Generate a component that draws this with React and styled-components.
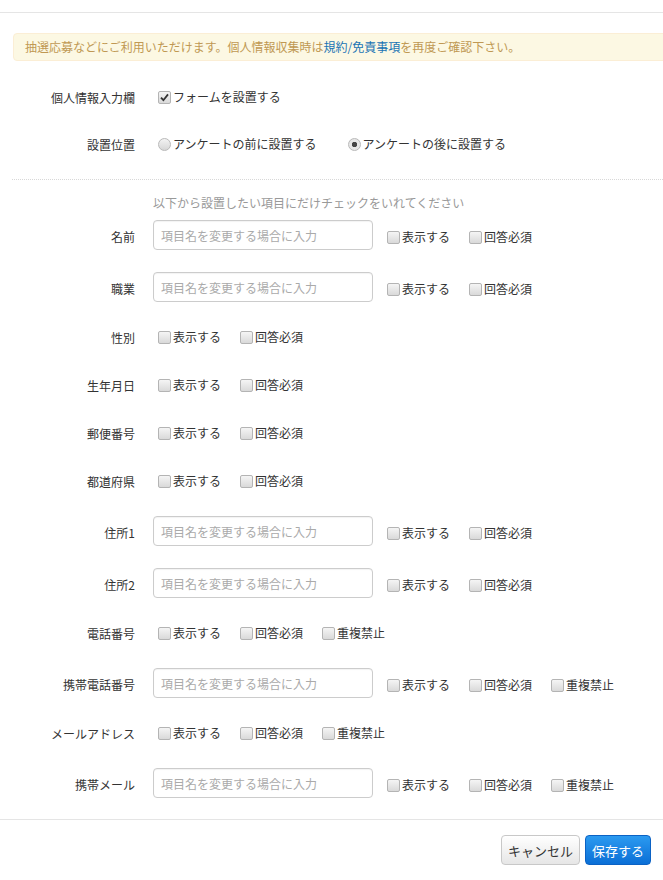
import React from 'react'
import styled, { createGlobalStyle, css } from 'styled-components'

const GlobalStyle = createGlobalStyle`
  html, body {
    margin: 0;
    padding: 0;
    background: #fff;
  }
  body {
    font-family: "Noto Sans CJK JP", "Noto Sans", sans-serif;
    font-size: 12px;
    color: #333;
  }
`

const fields = [
  { name: '名前', input: true, opts: ['表示する', '回答必須'] },
  { name: '職業', input: true, opts: ['表示する', '回答必須'] },
  { name: '性別', opts: ['表示する', '回答必須'] },
  { name: '生年月日', opts: ['表示する', '回答必須'] },
  { name: '郵便番号', opts: ['表示する', '回答必須'] },
  { name: '都道府県', opts: ['表示する', '回答必須'] },
  { name: '住所1', input: true, opts: ['表示する', '回答必須'] },
  { name: '住所2', input: true, opts: ['表示する', '回答必須'] },
  { name: '電話番号', opts: ['表示する', '回答必須', '重複禁止'] },
  { name: '携帯電話番号', input: true, opts: ['表示する', '回答必須', '重複禁止'] },
  { name: 'メールアドレス', opts: ['表示する', '回答必須', '重複禁止'] },
  { name: '携帯メール', input: true, opts: ['表示する', '回答必須', '重複禁止'] },
]

const Check = ({ checked }) => (
  <CheckBox>
    {checked && (
      <svg width="9" height="9" viewBox="0 0 9 9">
        <path d="M1 4.6 L3.4 7.2 L8 1.4" fill="none" stroke="#333" strokeWidth="1.8" />
      </svg>
    )}
  </CheckBox>
)

const Option = ({ label, checked, last }) => (
  <OptionLabel last={last}>
    <Check checked={checked} />
    <span>{label}</span>
  </OptionLabel>
)

const App = () => {
  return (
    <>
      <GlobalStyle />
      <Modal>
        <TopRule />
        <Body>
          <Alert>
            抽選応募などにご利用いただけます。個人情報収集時は<Link>規約/免責事項</Link>を再度ご確認下さい。
          </Alert>

          <Row first>
            <Label>個人情報入力欄</Label>
            <Controls>
              <Options indent>
                <Option label="フォームを設置する" checked last />
              </Options>
            </Controls>
          </Row>

          <Row>
            <Label>設置位置</Label>
            <Controls>
              <RadioLabel>
                <Radio />
                <span>アンケートの前に設置する</span>
              </RadioLabel>
              <RadioLabel>
                <Radio checked />
                <span>アンケートの後に設置する</span>
              </RadioLabel>
            </Controls>
          </Row>

          <Divider />

          <Hint>以下から設置したい項目にだけチェックをいれてください</Hint>

          {fields.map(f => (
            <FieldRow key={f.name} tall={f.input}>
              <Label>{f.name}</Label>
              <Controls>
                {f.input && <TextInput placeholder="項目名を変更する場合に入力" />}
                <Options indent={!f.input}>
                  {f.opts.map((o, i) => (
                    <Option key={o} label={o} last={i === f.opts.length - 1} />
                  ))}
                </Options>
              </Controls>
            </FieldRow>
          ))}
        </Body>
        <Footer>
          <Button>キャンセル</Button>
          <Button primary>保存する</Button>
        </Footer>
      </Modal>
    </>
  )
}

export default App

const Modal = styled.div`
  width: 663px;
  overflow: hidden;
`
const TopRule = styled.div`
  height: 12px;
  border-bottom: 1px solid #e5e5e5;
`
const Body = styled.div`
  padding: 20px 0 0 13px;
`
const Alert = styled.div`
  width: 680px;
  box-sizing: border-box;
  padding: 6px 11px;
  line-height: 14px;
  font-size: 12px;
  color: #c09853;
  background: #fcf8e3;
  border: 1px solid #fbeed5;
  border-radius: 4px;
`
const Link = styled.span`
  color: #1a74b4;
`
const Row = styled.div`
  display: flex;
  align-items: center;
  height: 20px;
  margin-top: ${p => (p.first ? '26px' : '27px')};
`
const Label = styled.div`
  width: 122px;
  flex: none;
  text-align: right;
  color: #333;
  white-space: nowrap;
`
const Controls = styled.div`
  display: flex;
  align-items: center;
  margin-left: 18px;
`
const Divider = styled.div`
  margin: 25px 0 0 -1px;
  border-top: 1px dotted #d8d8d8;
`
const Hint = styled.div`
  margin: 15px 0 0 140px;
  line-height: 16px;
  color: #999;
`
const FieldRow = styled.div`
  display: flex;
  align-items: center;
  height: ${p => (p.tall ? '32px' : '28px')};
  margin-top: ${p => (p.tall ? '8px' : '20px')};
  & + & {
    margin-top: 20px;
  }
  ${p =>
    p.tall &&
    css`
      & > ${Label} {
        padding-top: 2px;
      }
    `}
`
const TextInput = styled.input`
  box-sizing: border-box;
  width: 220px;
  height: 30px;
  align-self: flex-start;
  margin: 0;
  padding: 4px 7px;
  font-family: inherit;
  font-size: 12px;
  color: #555;
  border: 1px solid #ccc;
  border-radius: 4px;
  box-shadow: inset 0 1px 1px rgba(0, 0, 0, 0.05);
  outline: none;
  &::placeholder {
    color: #aaa;
  }
`
const Options = styled.div`
  display: flex;
  align-items: center;
  margin-left: ${p => (p.indent ? '5px' : '14px')};
  padding-top: ${p => (p.indent ? '0' : '4px')};
`
const OptionLabel = styled.label`
  display: flex;
  align-items: center;
  margin-right: ${p => (p.last ? '0' : '19px')};
  color: #333;
  line-height: 16px;
  white-space: nowrap;
`
const CheckBox = styled.span`
  box-sizing: border-box;
  width: 13px;
  height: 13px;
  margin-right: 2px;
  display: flex;
  align-items: center;
  justify-content: center;
  border: 1px solid #b4b4b4;
  border-radius: 2px;
  background: linear-gradient(#f5f5f5, #d9d9d9);
`
const RadioLabel = styled.label`
  display: flex;
  align-items: center;
  margin-right: 31px;
  margin-left: 5px;
  line-height: 16px;
  white-space: nowrap;
  & + & {
    margin-left: 0;
  }
`
const Radio = styled.span`
  box-sizing: border-box;
  width: 13px;
  height: 13px;
  margin-right: 2px;
  border-radius: 50%;
  border: 1px solid #b9b9b9;
  background: ${p =>
    p.checked
      ? 'radial-gradient(circle, #444 0 2.4px, #e6e6e6 3px)'
      : 'linear-gradient(#f3f3f3, #d6d6d6)'};
`
const Footer = styled.div`
  margin-top: 20px;
  border-top: 1px solid #e5e5e5;
  padding: 15px 12px 14px 0;
  display: flex;
  justify-content: flex-end;
  gap: 5px;
`
const Button = styled.button`
  height: 30px;
  padding: 0 6px;
  font-family: inherit;
  font-size: 13px;
  border-radius: 4px;
  cursor: pointer;
  ${p =>
    p.primary
      ? css`
          color: #fff;
          border: 1px solid #0b62c4;
          background: linear-gradient(#2b9af0, #0b6fd6);
        `
      : css`
          color: #333;
          border: 1px solid #c8c8c8;
          background: linear-gradient(#fff, #e6e6e6);
        `}
`
